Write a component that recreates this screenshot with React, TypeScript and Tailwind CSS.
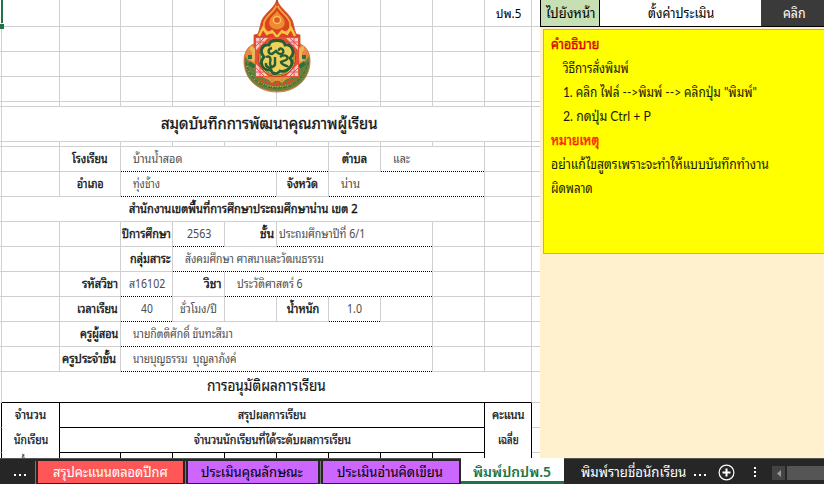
import { useLayoutEffect, useRef } from "react";
import type { ReactNode } from "react";
import clsx from "clsx";

// One line of text, condensed or widened to fill the given width.
function Fit({ w, className, children }: { w: number; className?: string; children: ReactNode }) {
  const ref = useRef<HTMLSpanElement>(null);
  useLayoutEffect(() => {
    const el = ref.current;
    if (el && el.offsetWidth > 0) el.style.transform = `scaleX(${w / el.offsetWidth})`;
  }, [w]);
  return (
    <span className={clsx("block shrink-0 whitespace-nowrap", className)} style={{ width: w }}>
      <span ref={ref} className="inline-block origin-left whitespace-pre">
        {children}
      </span>
    </span>
  );
}

type Line = "grey" | "dots" | "black" | "none";
interface CellData {
  w: number;
  t?: string;
  tw?: number;
  pl?: number;
  pr?: number;
  b?: Line;
  r?: Line;
  cls?: string;
}

const bottomLine: Record<Line, string> = {
  grey: "border-b border-b-[#d0d0d0]",
  dots: "border-b border-b-transparent bg-[repeating-linear-gradient(90deg,#000_0_1px,#fff_1px_2px)] bg-[length:100%_1px] bg-bottom bg-no-repeat [background-origin:border-box]",
  black: "border-b border-b-black",
  none: "",
};
const rightLine: Record<Line, string> = {
  grey: "border-r border-r-[#d0d0d0]",
  dots: "border-r border-r-transparent",
  black: "border-r border-r-black",
  none: "",
};

function Cell({ w, t, tw = 0, pl, pr, b = "grey", r = "grey", cls }: CellData) {
  const side = pl !== undefined ? "justify-start" : pr !== undefined ? "justify-end" : "justify-center";
  return (
    <div
      className={clsx("flex shrink-0 items-center", side, bottomLine[b], rightLine[r], cls)}
      style={{ width: w, paddingLeft: pl, paddingRight: pr }}
    >
      {t && <Fit w={tw}>{t}</Fit>}
    </div>
  );
}

const label = "pb-[2px] text-[12px] text-[#111] [-webkit-text-stroke:0.35px_#111]";
const gridLabel = "pb-[3px] text-[12px] text-[#111] [-webkit-text-stroke:0.25px_#111]";
const value = "pb-[2px] text-[12px] text-[#4c4c4c]";
const e = (w: number): CellData => ({ w });
const edge: CellData = { w: 2 };
const tail: CellData[] = [{ w: 47 }, { w: 8, r: "none" }];
const blank: CellData[] = [edge, e(58), e(61), e(52), e(52), e(52), e(52), e(52), e(52), e(52), ...tail];

const rows: { h: number; cells: CellData[] }[] = [
  {
    h: 27,
    cells: [
      ...blank.slice(0, 10),
      { w: 47, t: "ปพ.5", tw: 25, cls: "text-[12px] text-black" },
      { w: 8, r: "none" },
    ],
  },
  { h: 25, cells: blank },
  { h: 25, cells: blank },
  { h: 25, cells: blank },
  { h: 5, cells: blank },
  {
    h: 35,
    cells: [
      edge,
      {
        w: 530,
        t: "สมุดบันทึกการพัฒนาคุณภาพผู้เรียน",
        tw: 217,
        cls: "text-[16px] text-[#111] pl-[6px] pb-[5px] [-webkit-text-stroke:0.3px_#111]",
      },
      tail[1],
    ],
  },
  { h: 5, cells: blank },
  {
    h: 25,
    cells: [
      edge,
      e(58),
      { w: 61, t: "โรงเรียน", tw: 36, cls: label },
      { w: 208, t: "บ้านน้ำสอด", tw: 49, pl: 12, b: "dots", cls: value },
      { w: 52, t: "ตำบล", tw: 25, cls: label },
      { w: 104, t: "และ", tw: 17, pl: 12, b: "dots", cls: value },
      ...tail,
    ],
  },
  {
    h: 25,
    cells: [
      edge,
      e(58),
      { w: 61, t: "อำเภอ", tw: 27, cls: label },
      { w: 156, t: "ทุ่งช้าง", tw: 27, pl: 12, b: "dots", cls: value },
      { w: 52, t: "จังหวัด", tw: 31, cls: label },
      { w: 156, t: "น่าน", tw: 19, pl: 12, b: "dots", cls: value },
      ...tail,
    ],
  },
  {
    h: 25,
    cells: [edge, { w: 483, t: "สำนักงานเขตพื้นที่การศึกษาประถมศึกษาน่าน เขต 2", tw: 229, cls: label }, ...tail],
  },
  {
    h: 25,
    cells: [
      edge,
      e(58),
      e(61),
      { w: 52, t: "ปีการศึกษา", tw: 49, pr: 1, cls: label },
      { w: 52, t: "2563", tw: 24, b: "dots", cls: value },
      { w: 52, t: "ชั้น", tw: 14, pr: 2, cls: label },
      { w: 156, t: "ประถมศึกษาปีที่ 6/1", tw: 86, pl: 2, b: "dots", cls: value },
      e(52),
      ...tail,
    ],
  },
  {
    h: 25,
    cells: [
      edge,
      e(58),
      e(61),
      { w: 52, t: "กลุ่มสาระ", tw: 40, pr: 2, cls: label },
      { w: 260, t: "สังคมศึกษา ศาสนาและวัฒนธรรม", tw: 139, pl: 12, b: "dots", cls: value },
      e(52),
      ...tail,
    ],
  },
  {
    h: 25,
    cells: [
      edge,
      e(58),
      { w: 61, t: "รหัสวิชา", tw: 36, pr: 2, cls: label },
      { w: 52, t: "ส16102", tw: 36, b: "dots", cls: value },
      { w: 52, t: "วิชา", tw: 18, pr: 2, cls: label },
      { w: 208, t: "ประวัติศาสตร์ 6", tw: 66, pl: 12, b: "dots", cls: value },
      e(52),
      ...tail,
    ],
  },
  {
    h: 25,
    cells: [
      edge,
      e(58),
      { w: 61, t: "เวลาเรียน", tw: 41, pr: 2, cls: label },
      { w: 52, t: "40", tw: 12, b: "dots", cls: value },
      { w: 52, t: "ชั่วโมง/ปี", tw: 37, cls: value },
      e(52),
      { w: 52, t: "น้ำหนัก", tw: 32, cls: label },
      { w: 52, t: "1.0", tw: 15, b: "dots", cls: value },
      e(52),
      e(52),
      ...tail,
    ],
  },
  {
    h: 25,
    cells: [
      edge,
      e(58),
      { w: 61, t: "ครูผู้สอน", tw: 38, pr: 2, cls: label },
      { w: 312, t: "นายกิตติศักดิ์ ขันทะสีมา", tw: 100, pl: 12, b: "dots", cls: value },
      e(52),
      ...tail,
    ],
  },
  {
    h: 25,
    cells: [
      edge,
      e(58),
      { w: 61, t: "ครูประจำชั้น", tw: 54, pr: 4, cls: label },
      { w: 312, t: "นายบุญธรรม  บุญลาภังค์", tw: 104, pl: 12, b: "dots", cls: value },
      e(52),
      ...tail,
    ],
  },
  {
    h: 31,
    cells: [
      edge,
      {
        w: 530,
        t: "การอนุมัติผลการเรียน",
        tw: 119,
        b: "black",
        cls: "text-[15px] text-[#111] pb-[6px] [-webkit-text-stroke:0.15px_#111]",
      },
      tail[1],
    ],
  },
  {
    h: 25,
    cells: [
      { w: 2, r: "black" },
      { w: 58, t: "จำนวน", tw: 31, b: "none", r: "black", cls: gridLabel },
      { w: 425, t: "สรุปผลการเรียน", tw: 68, b: "black", r: "black", cls: gridLabel },
      { w: 47, t: "คะแนน", tw: 33, b: "none", r: "black", cls: gridLabel },
      tail[1],
    ],
  },
  {
    h: 25,
    cells: [
      { w: 2, r: "black" },
      { w: 58, t: "นักเรียน", tw: 34, b: "none", r: "black", cls: gridLabel },
      { w: 425, t: "จำนวนนักเรียนที่ได้ระดับผลการเรียน", tw: 157, b: "black", r: "black", cls: gridLabel },
      { w: 47, t: "เฉลี่ย", tw: 21, b: "none", r: "black", cls: gridLabel },
      tail[1],
    ],
  },
];

function Emblem() {
  return (
    <svg viewBox="0 0 68 96" className="h-24 w-[68px]">
      {/* disc and its green rim */}
      <path d="M14 45C5 47 1 54 1 63c0 18 14 31 33 31s33-13 33-31c0-9-4-16-13-18Z" fill="#e9893f" stroke="#c46a3a" strokeWidth=".8" />
      <path d="M2 58c2 4 5 6 7 8 4 10 13 17 25 17s21-7 25-17c2-2 5-4 7-8 3 22-12 35-32 35S-1 80 2 58Z" fill="#68813c" />
      <path d="M4 68c4 14 15 21 30 21s26-7 30-21" fill="none" stroke="#d9b545" strokeWidth="1.6" strokeDasharray="1.2 1.3" />
      <path d="M3 64c3 16 15 26 31 26s28-10 31-26" fill="none" stroke="#3d6e34" strokeWidth="1.4" strokeDasharray="4 1" />
      <path d="M7 50c5 1 5 8 2 13m52-13c-5 1-5 8-2 13" fill="none" stroke="#eab85c" strokeWidth="4" />
      <path d="M5 59h4m50 0h4M6 65l6 4m50-4-6 4M12 75l5 2m39-2-5 2" fill="none" stroke="#2e7040" strokeWidth="4" />
      {/* crown */}
      <path d="M34 0c0 8 11 14 15 22 2 5 2 9 4 14l4 1v12H11V37l4-1c2-5 2-9 4-14C23 14 34 8 34 0Z" fill="#dd4222" stroke="#c9552f" strokeWidth=".8" />
      <path d="M34 5c0 8-12 12-13 20-1 6 1 9 8 10m5-30c0 8 12 12 13 20 1 6-1 9-8 10" fill="none" stroke="#f3a83b" strokeWidth="1.8" />
      <path d="M34 12c-2 4-7 6-8 11s2 8 8 9c6-1 9-4 8-9s-6-7-8-11Z" fill="#ee8a31" stroke="#d8461f" />
      <circle cx="34" cy="22" r="3.6" fill="#e3552a" stroke="#f9c650" strokeWidth="1.5" />
      <path d="M16 38l4-8 4 6 5-3 5 6 5-6 5 3 4-6 4 8" fill="none" stroke="#f8c544" strokeWidth="2.4" />
      <path d="M34 0v8" stroke="#b8482c" strokeWidth="1.6" />
      {/* square panel with lattice corners */}
      <path d="M12 39h44v40H12Z" fill="#e55233" />
      <path d="M13 40h12L13 52Zm42 0H43l12 12ZM13 78h12L13 66Zm42 0H43l12-12Z" fill="#f9c9c4" />
      <path d="M13 44h8M17 40v8M13 48l8-8m34 4h-8m4-4v8m4 0-8-8M13 74h8m-4 4v-8m-4 0 8 8m34-4h-8m4 4v-8m4 0-8 8" fill="none" stroke="#ea5058" strokeWidth="1" />
      {/* cipher */}
      <circle cx="34" cy="60" r="18.5" fill="#f3bf45" stroke="#c23a22" />
      <circle cx="34" cy="60" r="17" fill="none" stroke="#4b6b30" strokeWidth=".9" />
      <path d="M26 47c1-6 15-6 16 0 7-1 11 8 5 13 6 7-4 15-10 13-3 4-8 3-9-1-9 1-12-8-7-13-5-6-2-13 5-12Z" fill="#efd05a" stroke="#245d36" strokeWidth="2.8" />
      <path d="M29 50c-5 1-4 6 0 6l4-3c3 5 9 3 7-1-2-3-5-1-4 1M23 59c5-2 5 3 4 6 0 6 6 4 5-1v-5M37 59c6-4 10 1 6 3l-5 2c1 4 6 3 7 5M23 65c-1 5 5 6 8 3" fill="none" stroke="#245d36" strokeWidth="2.4" />
      {/* ribbon below */}
      <path d="M17 82c10 5 24 5 34 0" fill="none" stroke="#e0482a" strokeWidth="3" strokeDasharray="4 1.5" />
      <path d="M25 80l4 4 5-4 5 4 4-4" fill="none" stroke="#d8a63a" strokeWidth="1.4" />
    </svg>
  );
}

function Sheet() {
  return (
    <div className="relative flex w-[540px] shrink-0 flex-col overflow-hidden bg-white">
      {rows.map((row, i) => (
        <div key={i} className="flex shrink-0 leading-none" style={{ height: row.h }}>
          {row.cells.map((c, j) => (
            <Cell key={j} {...c} />
          ))}
        </div>
      ))}
      <div className="flex h-[25px] shrink-0">
        <div className="w-[2px] border-r border-black" />
        <div className="flex w-[58px] justify-center border-r border-black text-[12px] leading-[17px]">
          <Fit w={22}>ทั้งหมด</Fit>
        </div>
        <div className="w-[61px] border-r border-black" />
        {[0, 1, 2, 3, 4, 5, 6].map((n) => (
          <div key={n} className="w-[52px] border-r border-black" />
        ))}
        <div className="w-[47px] border-r border-black" />
      </div>
      <div className="absolute left-[243px] top-[-2px]">
        <Emblem />
      </div>
      <div className="absolute left-[1px] top-0 h-[23px] w-[2px] bg-[#217346]" />
      <div className="absolute left-0 top-6 h-[5px] w-1 bg-[#217346]" />
    </div>
  );
}

const notes: { t: string; w: number; cls: string }[] = [
  { t: "คำอธิบาย", w: 48, cls: "text-[#d90000] [-webkit-text-stroke:0.4px_#d90000]" },
  { t: "วิธีการสั่งพิมพ์", w: 66, cls: "ml-3" },
  { t: '1. คลิก ไฟล์ -->พิมพ์ --> คลิกปุ่ม "พิมพ์"', w: 194, cls: "ml-3" },
  { t: "2. กดปุ่ม Ctrl + P", w: 88, cls: "ml-3" },
  { t: "หมายเหตุ", w: 48, cls: "text-[#ff1a00] [-webkit-text-stroke:0.4px_#ff1a00]" },
  { t: "อย่าแก้ไขสูตรเพราะจะทำให้แบบบันทึกทำงาน", w: 218, cls: "" },
  { t: "ผิดพลาด", w: 42, cls: "" },
];

function SidePanel() {
  return (
    <div className="flex grow flex-col bg-[#fff0ce]">
      <div className="flex h-[27px] shrink-0 items-stretch border-b border-l border-black text-[14px] leading-none text-black">
        <div className="flex w-[59px] items-center justify-center border-r border-black bg-[#c6e0b4] pb-[2px]">
          <Fit w={49}>ไปยังหน้า</Fit>
        </div>
        <div className="flex w-[161px] items-center justify-center bg-white pb-[2px]">
          <Fit w={66}>ตั้งค่าประเมิน</Fit>
        </div>
        <div className="flex grow items-center justify-center bg-[#3a3a3a] pb-[2px] pl-1 text-white">
          <Fit w={23}>คลิก</Fit>
        </div>
      </div>
      <div className="ml-[3px] mt-[2px] h-[225px] border border-r-0 border-[#b9b95a] bg-[#ffff00] pl-[7px] pt-[2px] font-['Lato','Noto_Sans_Thai_Looped','TH_Sarabun_New','Loma',sans-serif] text-[13.5px] leading-6 text-[#1a1a00]">
        {notes.map((n) => (
          <Fit key={n.t} w={n.w} className={n.cls}>
            {n.t}
          </Fit>
        ))}
      </div>
    </div>
  );
}

function TabBar() {
  return (
    <div className="z-10 flex h-[26px] shrink-0 items-stretch border-t border-[#555] bg-[#262626] text-[14px] leading-none text-white">
      <div className="flex w-[35px] items-center justify-end pr-[9px] pt-[6px]">
        <Dots />
      </div>
      <div className="mr-[2px] mt-[2px] w-px bg-[#777]" />
      <div className="mt-[2px] flex h-[22px] w-[145px] items-center justify-center bg-[#ff5757] pb-[3px]">
        <Fit w={115}>สรุปคะแนนตลอดปีกศ</Fit>
      </div>
      <div className="ml-[2px] mr-[2px] mt-[2px] w-px bg-[#777]" />
      <div className="mt-[2px] flex h-[22px] w-[130px] items-center justify-center bg-[#cc66ff] pb-[3px] pr-[2px] text-black">
        <Fit w={102}>ประเมินคุณลักษณะ</Fit>
      </div>
      <div className="ml-[2px] mr-[2px] mt-[2px] w-px bg-[#777]" />
      <div className="mt-[2px] flex h-[22px] w-[136px] items-center justify-center bg-[#cc66ff] pb-[3px] pr-[2px] text-black">
        <Fit w={106}>ประเมินอ่านคิดเขียน</Fit>
      </div>
      <div className="-mt-px ml-[2px] flex w-[103px] items-center justify-center border-b-[3px] border-[#217346] bg-white pr-[2px] pt-[2px] font-semibold text-[#217346]">
        <Fit w={78}>พิมพ์ปกปพ.5</Fit>
      </div>
      <div className="flex items-center pb-px pl-[17px]">
        <Fit w={105}>พิมพ์รายชื่อนักเรียน</Fit>
        <div className="ml-2 pt-[7px]">
          <Dots />
        </div>
      </div>
      <div className="ml-[12px] flex items-center pt-[2px]">
        <svg className="size-[17px]" viewBox="0 0 17 17" fill="none" stroke="white">
          <circle cx="8.5" cy="8.5" r="7.4" strokeWidth="1.2" />
          <path d="M8.5 4.5v8M4.5 8.5h8" strokeWidth="2" />
        </svg>
      </div>
      <div className="ml-[19px] flex flex-col justify-center gap-[2px] pt-px">
        <div className="size-[2px] bg-white" />
        <div className="size-[2px] bg-white" />
        <div className="size-[2px] bg-white" />
      </div>
      <div className="ml-[16px] mt-[7px] flex h-[14px] w-[13px] items-center justify-center bg-[#444]">
        <svg className="h-[7px] w-1" viewBox="0 0 4 7">
          <path d="M4 0v7L0 3.5Z" fill="#999" />
        </svg>
      </div>
      <div className="ml-[2px] mt-[7px] h-[14px] grow bg-[#555]" />
    </div>
  );
}

function Dots() {
  return (
    <div className="flex gap-[3px]">
      <div className="size-[2px] bg-white" />
      <div className="size-[2px] bg-white" />
      <div className="size-[2px] bg-white" />
    </div>
  );
}

export default function App() {
  return (
    <div className="flex h-[484px] w-[824px] flex-col overflow-hidden font-['Noto_Sans_Thai_Looped','TH_Sarabun_New','Loma','Noto_Sans',sans-serif]">
      <div className="flex h-[458px] shrink-0">
        <Sheet />
        <SidePanel />
      </div>
      <TabBar />
    </div>
  );
}
